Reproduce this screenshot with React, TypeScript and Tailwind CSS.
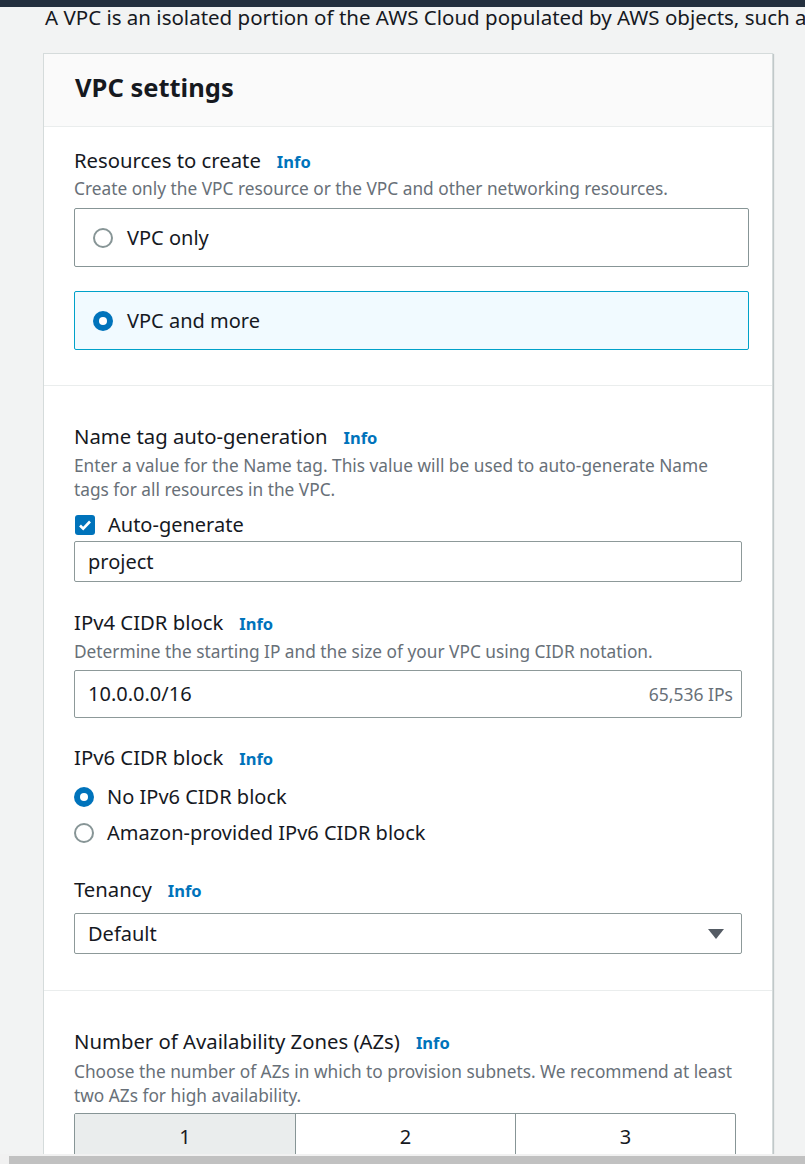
import type { ReactNode } from 'react';

function Info() {
  return <span className="ml-4 text-[16.5px] font-bold text-[#0073bb]">Info</span>;
}

function Label({ children }: { children: ReactNode }) {
  return (
    <div className="flex h-[24px] items-baseline overflow-visible text-[20.3px] leading-[24px] text-[#16191f]">
      <span>{children}</span>
      <Info />
    </div>
  );
}

function Desc({ children }: { children: ReactNode }) {
  return <p className="text-[17.3px] leading-[24px] text-[#687078]">{children}</p>;
}

function Radio({ checked }: { checked?: boolean }) {
  if (checked) {
    return (
      <span className="flex h-[20px] w-[20px] shrink-0 items-center justify-center rounded-full bg-[#0073bb]">
        <span className="h-[8px] w-[8px] rounded-full bg-white" />
      </span>
    );
  }
  return <span className="h-[20px] w-[20px] shrink-0 rounded-full border-2 border-[#879596] bg-white" />;
}

function Tile({ label, checked }: { label: string; checked?: boolean }) {
  return (
    <div
      className={
        checked
          ? 'flex h-[59px] w-[675px] items-center gap-[14px] rounded-[2px] border border-[#00a1c9] bg-[#f1faff] pl-[18px]'
          : 'flex h-[59px] w-[675px] items-center gap-[14px] rounded-[2px] border border-[#879596] bg-white pl-[18px]'
      }
    >
      <Radio checked={checked} />
      <span className="text-[20px] text-[#16191f]">{label}</span>
    </div>
  );
}

export default function App() {
  return (
    <div
      className="relative h-[1164px] overflow-hidden bg-[#f2f3f3] text-[#16191f]"
      style={{ fontFamily: '"Noto Sans", "Open Sans", sans-serif' }}
    >
      <div className="h-[7px] bg-[#232f3e]" />
      <p className="ml-[45px] h-[20px] whitespace-nowrap text-[20.5px] leading-[20px]">
        A VPC is an isolated portion of the AWS Cloud populated by AWS objects, such a
      </p>

      {/* VPC settings panel */}
      <div className="ml-[43px] mt-[26px] w-[730px] border border-[#d5dbdb] bg-white shadow-[1px_1px_1px_0_rgba(0,28,36,0.2)]">
        <div className="flex h-[73px] items-center border-b border-[#eaeded] bg-[#fafafa] pb-[6px] pl-[31px]">
          <h2 className="text-[25.5px] font-bold">VPC settings</h2>
        </div>

        <div className="border-b border-[#eaeded] pb-[35px] pl-[30px] pt-[21px]">
          <Label>Resources to create</Label>
          <div className="mt-[5px]">
            <Desc>Create only the VPC resource or the VPC and other networking resources.</Desc>
          </div>
          <div className="mt-[7px] flex flex-col gap-[24px]">
            <Tile label="VPC only" />
            <Tile label="VPC and more" checked />
          </div>
        </div>

        <div className="border-b border-[#eaeded] pb-[36px] pl-[30px] pt-[38px]">
          <Label>Name tag auto-generation</Label>
          <div className="mt-[6px] w-[660px]">
            <Desc>Enter a value for the Name tag. This value will be used to auto-generate Name tags for all resources in the VPC.</Desc>
          </div>
          <div className="mt-[11px] flex h-[24px] items-center gap-[13px] pl-[1px]">
            <span className="flex h-[20px] w-[20px] items-center justify-center rounded-[3px] bg-[#0073bb]">
              <svg width="14" height="14" viewBox="0 0 14 14">
                <path d="M2 7.5l3.2 3.2L12 3.5" fill="none" stroke="white" strokeWidth="2.6" />
              </svg>
            </span>
            <span className="text-[20px]">Auto-generate</span>
          </div>
          <div className="mt-[4px] flex h-[41px] w-[668px] items-center rounded-[2px] border border-[#8d9999] px-[13px] text-[20px]">
            project
          </div>

          <div className="mt-[28px]">
            <Label>IPv4 CIDR block</Label>
          </div>
          <div className="mt-[6px]">
            <Desc>Determine the starting IP and the size of your VPC using CIDR notation.</Desc>
          </div>
          <div className="mt-[6px] flex h-[48px] w-[668px] items-center justify-between rounded-[2px] border border-[#8d9999] pl-[13px] pr-[8px]">
            <span className="text-[20px]">10.0.0.0/16</span>
            <span className="text-[17.5px] text-[#687078]">65,536 IPs</span>
          </div>

          <div className="mt-[27px]">
            <Label>IPv6 CIDR block</Label>
          </div>
          <div className="mt-[16px] flex flex-col gap-[12px]">
            <div className="flex h-[24px] items-center gap-[13px]">
              <Radio checked />
              <span className="text-[20px]">No IPv6 CIDR block</span>
            </div>
            <div className="flex h-[24px] items-center gap-[13px]">
              <Radio />
              <span className="text-[20px]">Amazon-provided IPv6 CIDR block</span>
            </div>
          </div>

          <div className="mt-[32px]">
            <Label>Tenancy</Label>
          </div>
          <div className="mt-[12px] flex h-[41px] w-[668px] items-center justify-between rounded-[2px] border border-[#8d9999] pl-[13px] pr-[17px]">
            <span className="text-[20px]">Default</span>
            <svg width="16" height="10" viewBox="0 0 16 10">
              <path d="M0 0h16L8 10z" fill="#545b64" />
            </svg>
          </div>
        </div>

        <div className="pb-[20px] pl-[30px] pt-[38px]">
          <Label>Number of Availability Zones (AZs)</Label>
          <div className="mt-[7px] w-[670px]">
            <Desc>Choose the number of AZs in which to provision subnets. We recommend at least two AZs for high availability.</Desc>
          </div>
          <div className="mt-[5px] grid h-[48px] w-[662px] grid-cols-3 overflow-hidden rounded-t-[2px] border border-[#879596] text-[20px]">
            <div className="flex items-center justify-center bg-[#eaeded]">1</div>
            <div className="flex items-center justify-center border-l border-[#879596]">2</div>
            <div className="flex items-center justify-center border-l border-[#879596]">3</div>
          </div>
        </div>
      </div>

      {/* browser scrollbar */}
      <div className="absolute bottom-0 left-0 right-0 h-[10px] bg-[#f1f1f1]">
        <div className="absolute bottom-0 left-[9px] right-0 top-[2px] bg-[#c1c1c1]" />
      </div>
    </div>
  );
}
